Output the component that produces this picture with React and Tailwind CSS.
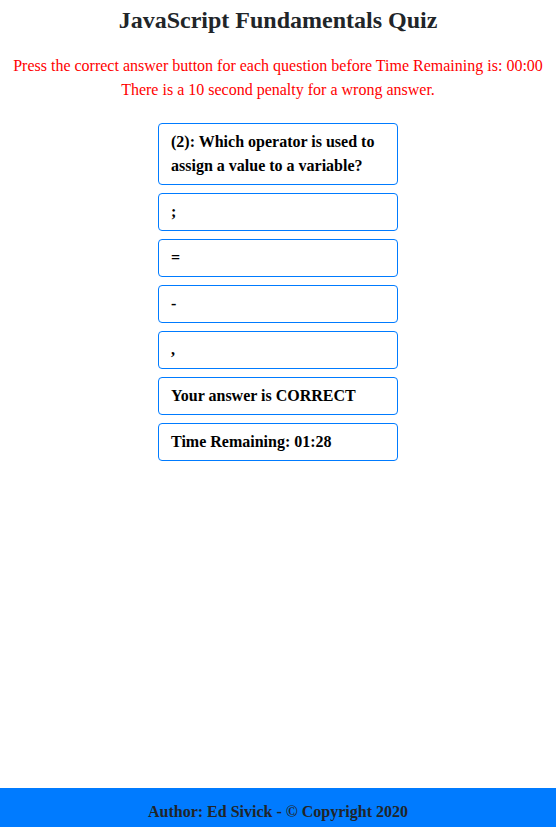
export default function App() {
  const answers = [";", "=", "-", ","];

  return (
    <div className="flex min-h-screen flex-col bg-white font-['Liberation_Serif','Times_New_Roman',serif]">
      <main className="flex flex-col items-center pt-[2px]">
        <h1 className="text-[24px] font-bold leading-[36px] text-[#212529]">JavaScript Fundamentals Quiz</h1>
        <p className="mt-[16px] text-center text-[16px] leading-[24px] text-[#ff0000]">
          Press the correct answer button for each question before Time Remaining is: 00:00
          <br />
          There is a 10 second penalty for a wrong answer.
        </p>

        <div className="mt-[21px] flex w-[240px] flex-col gap-[8px]">
          <div className="rounded-[4px] border border-[#007bff] px-[12px] py-[6px] text-[16px] font-bold leading-[24px] text-black">
            (2): Which operator is used to assign a value to a variable?
          </div>
          {answers.map((answer) => (
            <button
              key={answer}
              className="h-[38px] rounded-[4px] border border-[#007bff] bg-white px-[12px] text-left text-[16px] font-bold leading-[24px] text-black"
            >
              {answer}
            </button>
          ))}
          <div className="rounded-[4px] border border-[#007bff] px-[12px] py-[6px] text-[16px] font-bold leading-[24px] text-black">
            Your answer is CORRECT
          </div>
          <div className="rounded-[4px] border border-[#007bff] px-[12px] py-[6px] text-[16px] font-bold leading-[24px] text-black">
            Time Remaining: 01:28
          </div>
        </div>
      </main>

      <footer className="mt-auto h-[39px] bg-[#007bff] pt-[12px] text-center text-[16px] font-bold leading-[24px] text-[#212529]">
        Author: Ed Sivick - © Copyright 2020
      </footer>
    </div>
  );
}
